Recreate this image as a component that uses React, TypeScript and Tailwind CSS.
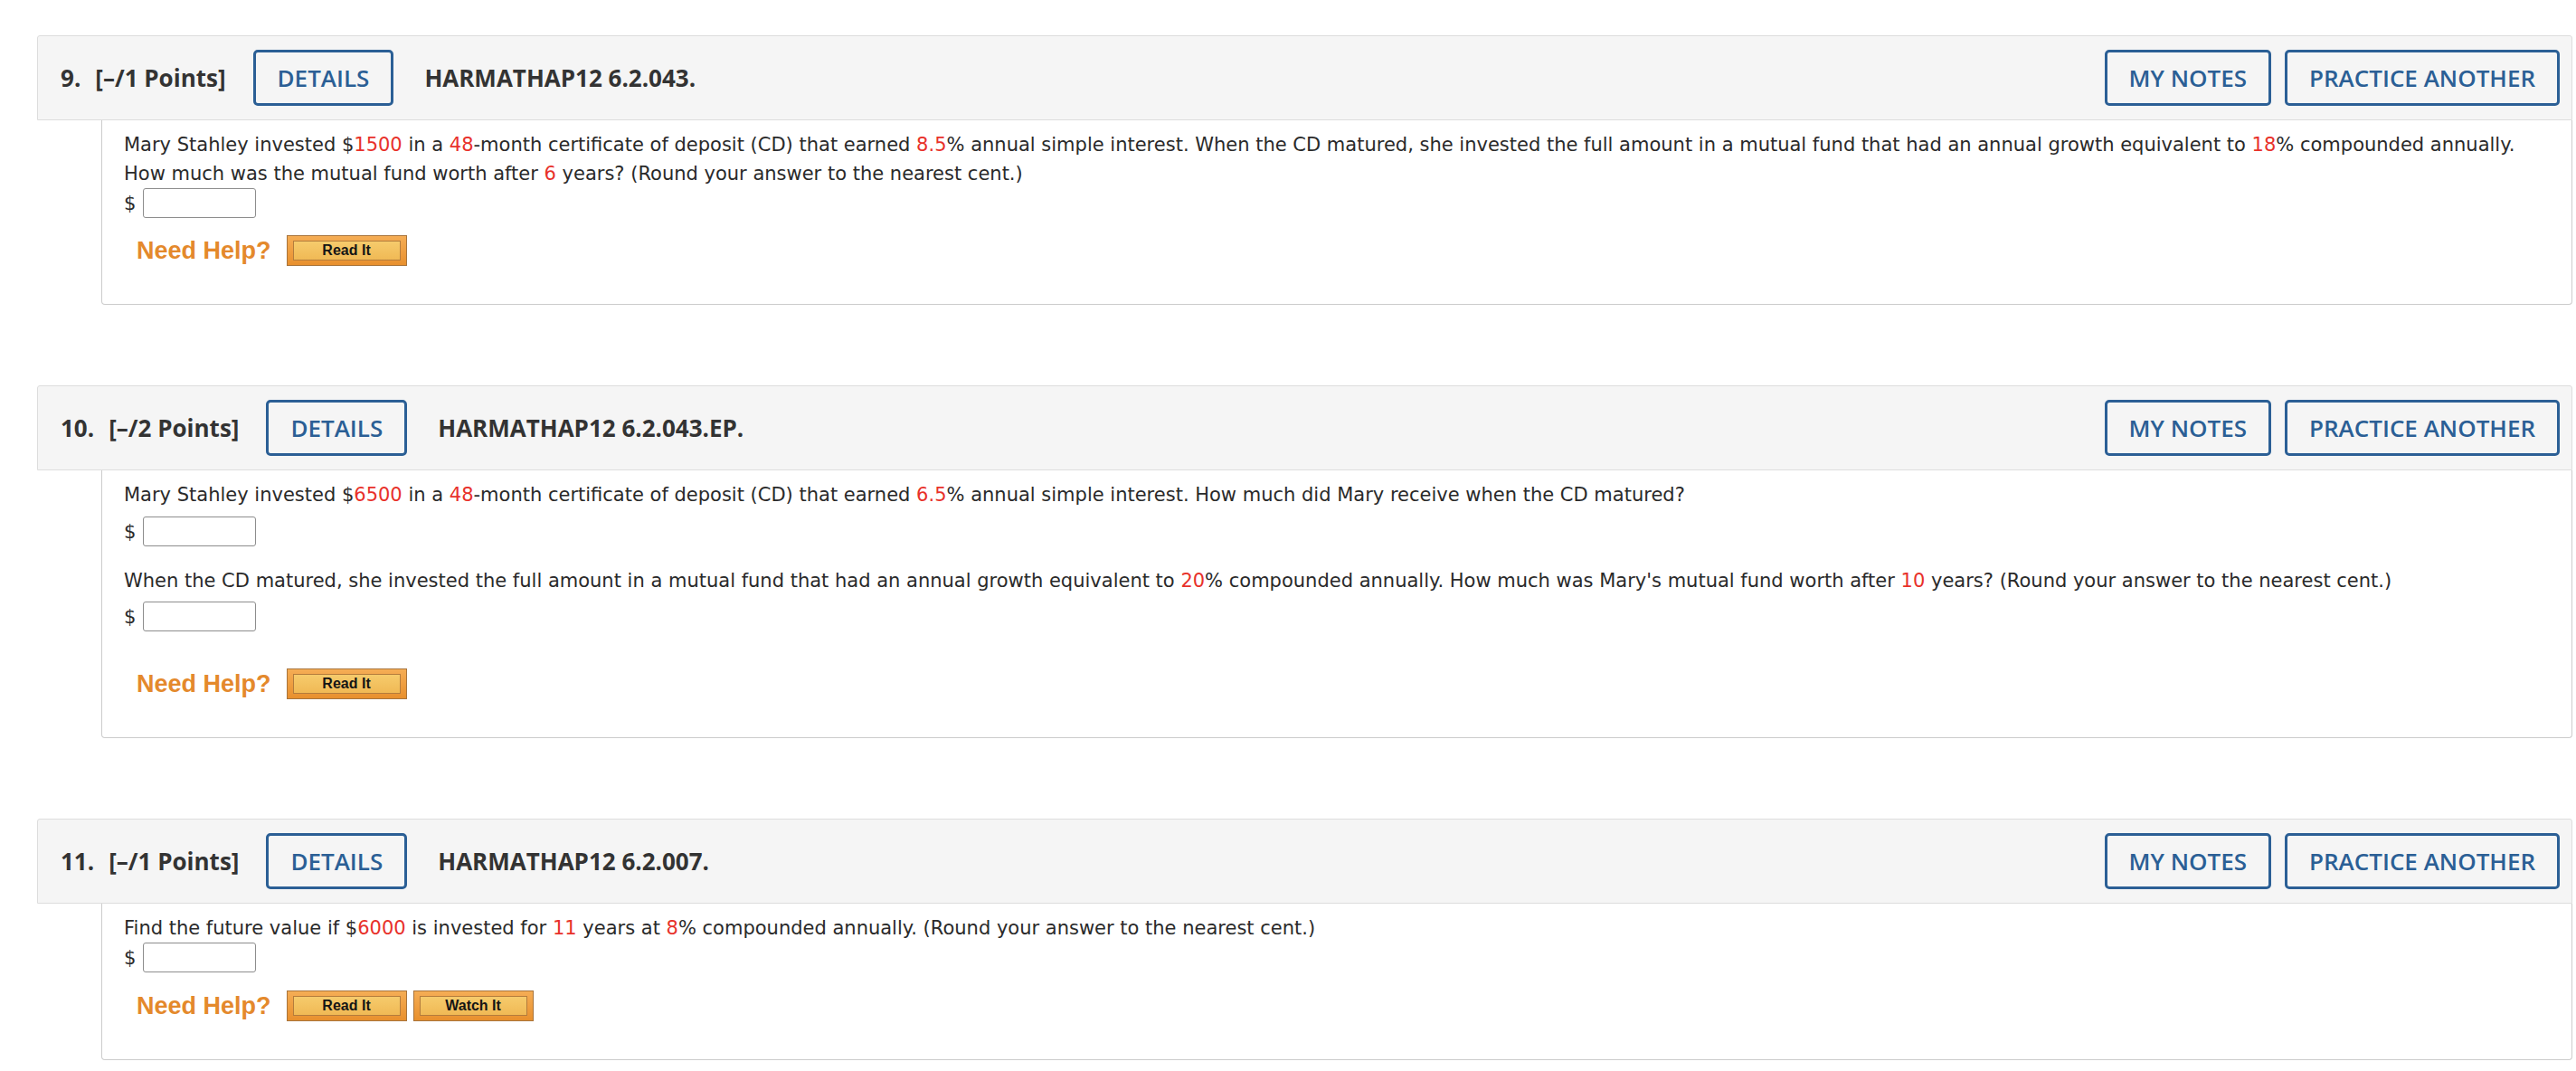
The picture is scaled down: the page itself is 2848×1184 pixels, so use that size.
import type { ReactNode } from "react";

function Num({ children }: { children: ReactNode }) {
  return <span className="text-[#e8312a]">{children}</span>;
}

function OutlineButton({ children }: { children: ReactNode }) {
  return (
    <button
      type="button"
      className="h-[62px] rounded-[5px] border-[3px] border-[#2b5f95] px-[24px] text-[26px] font-semibold leading-none text-[#2b5f95]"
    >
      {children}
    </button>
  );
}

function HelpButton({ label }: { label: string }) {
  return (
    <button
      type="button"
      className="flex h-[34px] w-[133px] items-stretch border border-[#a8743c] bg-[linear-gradient(#f5ad55,#e8902e)] px-[6px] py-[5px]"
    >
      <span className="flex flex-1 items-center justify-center border border-[#b47c3c] bg-[linear-gradient(#f6cb6c,#f0b955)] font-['Liberation_Sans',Arial,sans-serif] text-[16px] font-bold leading-none text-[#151515]">
        {label}
      </span>
    </button>
  );
}

function AnswerBox() {
  return (
    <div className="flex items-center gap-[8px]">
      <span>$</span>
      <input
        type="text"
        className="h-[33px] w-[125px] rounded-[3px] border border-[#8d8d8d] bg-white"
      />
    </div>
  );
}

function NeedHelp({ watch = false }: { watch?: boolean }) {
  return (
    <div className="flex items-center pl-[14px]">
      <span className="mr-[17px] font-['Liberation_Sans',Arial,sans-serif] text-[27px] font-bold leading-none text-[#e4892c]">
        Need Help?
      </span>
      <div className="flex gap-[7px]">
        <HelpButton label="Read It" />
        {watch && <HelpButton label="Watch It" />}
      </div>
    </div>
  );
}

interface QuestionProps {
  num: number;
  points: number;
  code: string;
  children: ReactNode;
}

function Question({ num, points, code, children }: QuestionProps) {
  return (
    <section>
      <div className="flex items-center rounded-t-[3px] border border-[#dddddd] bg-[#f5f5f5] py-[15px] pl-[25px] pr-[13px] font-['Open_Sans',sans-serif] text-[#333333]">
        <span className="text-[26px] font-bold">{num}.</span>
        <span className="ml-[16px] text-[26px] font-bold">[–/{points} Points]</span>
        <div className="ml-[30px]">
          <OutlineButton>DETAILS</OutlineButton>
        </div>
        <span className="ml-[34px] text-[26px] font-bold">{code}</span>
        <div className="ml-auto flex gap-[15px]">
          <OutlineButton>MY NOTES</OutlineButton>
          <OutlineButton>PRACTICE ANOTHER</OutlineButton>
        </div>
      </div>
      <div className="ml-[71px] rounded-b-[4px] border-x border-b border-[#cccccc] pb-[42px] pl-[24px] pr-[20px] pt-[11px] font-['DejaVu_Sans',Verdana,sans-serif] text-[21px] leading-[32px] text-[#2a2a2a]">
        {children}
      </div>
    </section>
  );
}

export default function App() {
  return (
    <div className="flex min-h-screen flex-col gap-[89px] bg-white pl-[41px] pr-[4px] pt-[39px]">
      <Question num={9} points={1} code="HARMATHAP12 6.2.043.">
        <p>
          Mary Stahley invested $<Num>1500</Num> in a <Num>48</Num>-month certificate of deposit (CD) that
          earned <Num>8.5</Num>% annual simple interest. When the CD matured, she invested the full amount in a
          mutual fund that had an annual growth equivalent to <Num>18</Num>% compounded annually. How much was
          the mutual fund worth after <Num>6</Num> years? (Round your answer to the nearest cent.)
        </p>
        <AnswerBox />
        <div className="mt-[19px]">
          <NeedHelp />
        </div>
      </Question>

      <Question num={10} points={2} code="HARMATHAP12 6.2.043.EP.">
        <p>
          Mary Stahley invested $<Num>6500</Num> in a <Num>48</Num>-month certificate of deposit (CD) that
          earned <Num>6.5</Num>% annual simple interest. How much did Mary receive when the CD matured?
        </p>
        <div className="mt-[8px]">
          <AnswerBox />
        </div>
        <p className="mt-[22px]">
          When the CD matured, she invested the full amount in a mutual fund that had an annual growth
          equivalent to <Num>20</Num>% compounded annually. How much was Mary's mutual fund worth after{" "}
          <Num>10</Num> years? (Round your answer to the nearest cent.)
        </p>
        <div className="mt-[7px]">
          <AnswerBox />
        </div>
        <div className="mt-[41px]">
          <NeedHelp />
        </div>
      </Question>

      <Question num={11} points={1} code="HARMATHAP12 6.2.007.">
        <p>
          Find the future value if $<Num>6000</Num> is invested for <Num>11</Num> years at <Num>8</Num>%
          compounded annually. (Round your answer to the nearest cent.)
        </p>
        <AnswerBox />
        <div className="mt-[20px]">
          <NeedHelp watch />
        </div>
      </Question>
    </div>
  );
}
